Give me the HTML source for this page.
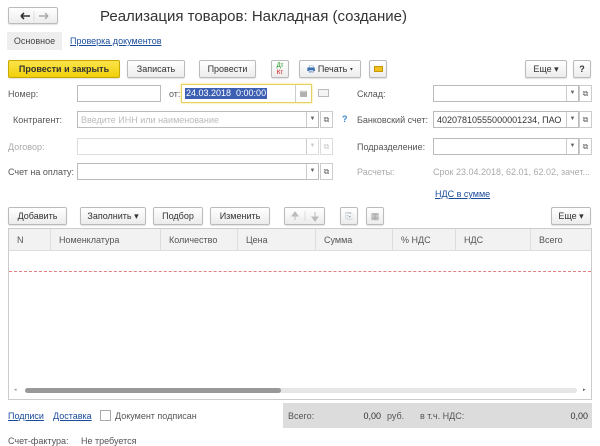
<!DOCTYPE html>
<html><head><meta charset="utf-8"><style>
*{box-sizing:border-box;margin:0;padding:0}
body{width:600px;height:443px;overflow:hidden;background:#fff;font-family:"Liberation Sans",Arial,sans-serif;font-size:9px;color:#333;position:relative}
.a{position:absolute}
.btn{position:absolute;border:1px solid #bbb;border-radius:2px;background:linear-gradient(#fff,#ececec);text-align:center;color:#333;font-size:9px;box-shadow:0 1px 1px rgba(0,0,0,.12)}
.inp{position:absolute;border:1px solid #bbb;background:#fff;height:17px}
.lbl{position:absolute;color:#555;font-size:9px}
.g{color:#aaa}
.lnk{position:absolute;color:#1a4c9c;text-decoration:underline;font-size:9px}
.dd{position:absolute;top:0;bottom:0;width:12px;border-left:1px solid #ccc;text-align:center;font-size:6px;color:#666;line-height:15px}
.ob{position:absolute;width:13px;height:17px;border:1px solid #ccc;background:#fff;font-size:8px;text-align:center;line-height:15px;color:#666}
.th{position:absolute;top:0;height:22px;line-height:22px;border-right:1px solid #ddd;color:#555;padding-left:8px}
</style></head><body>
<div class="btn" style="left:8px;top:7px;width:50px;height:17px">
<svg class="a" style="left:0;top:0" width="50" height="16"><path d="M12 8h9M12 8l3-3M12 8l3 3" stroke="#333" stroke-width="1.6" fill="none"/><line x1="25" y1="3" x2="25" y2="13" stroke="#ddd"/><path d="M30 8h9M39 8l-3-3M39 8l-3 3" stroke="#aaa" stroke-width="1.4" fill="none"/></svg></div>
<div class="a" style="left:100px;top:8px;font-size:15px;color:#333">Реализация товаров: Накладная (создание)</div>
<div class="a" style="left:7px;top:32px;width:55px;height:18px;background:#eee;line-height:18px;text-align:center;color:#444">Основное</div>
<div class="lnk" style="left:70px;top:36px">Проверка документов</div>

<div class="btn" style="left:8px;top:60px;width:112px;height:18px;line-height:16px;background:linear-gradient(#fbe44a,#f0cf0a);border-color:#c9a800;font-weight:bold;color:#333">Провести и закрыть</div>
<div class="btn" style="left:127px;top:60px;width:58px;height:18px;line-height:16px">Записать</div>
<div class="btn" style="left:199px;top:60px;width:57px;height:18px;line-height:16px">Провести</div>
<div class="btn" style="left:271px;top:60px;width:18px;height:18px;font-size:6px;line-height:7px;padding-top:2px"><span style="color:#080">Дт</span><br><span style="color:#c00">Кт</span></div>
<div class="btn" style="left:299px;top:60px;width:62px;height:18px;line-height:16px"><span style="color:#3a6fb0">🖶</span> Печать ▾</div>
<div class="btn" style="left:369px;top:60px;width:18px;height:18px"><div class="a" style="left:4px;top:5px;width:9px;height:6px;background:#f0c020;border:1px solid #c89800"></div></div>
<div class="btn" style="left:525px;top:60px;width:42px;height:18px;line-height:16px">Еще ▾</div>
<div class="btn" style="left:573px;top:60px;width:18px;height:18px;line-height:16px;font-weight:bold">?</div>

<div class="lbl" style="left:8px;top:89px">Номер:</div>
<div class="inp" style="left:77px;top:85px;width:84px"></div>
<div class="lbl" style="left:169px;top:89px">от:</div>
<div class="inp" style="left:181px;top:84px;width:131px;height:19px;border:1px solid #e8d060;box-shadow:0 0 2px #f0dc70">
<span class="a" style="left:3px;top:3px;background:#3c5fb4;color:#fff;padding:0 1px;font-size:9px;line-height:11px">24.03.2018&nbsp; 0:00:00</span>
<div class="dd" style="right:0;width:16px;font-size:8px;line-height:17px">▤</div></div>
<div class="a" style="left:318px;top:89px;width:11px;height:8px;border:1px solid #bbb;background:#f4f4f4"></div>
<div class="lbl" style="left:357px;top:89px">Склад:</div>
<div class="inp" style="left:433px;top:85px;width:146px"><div class="dd" style="right:0">▼</div></div>
<div class="ob" style="left:579px;top:85px">⧉</div>

<div class="lbl" style="left:13px;top:115px">Контрагент:</div>
<div class="inp" style="left:77px;top:111px;width:242px"><span class="a g" style="left:3px;top:3px;color:#bbb">Введите ИНН или наименование</span><div class="dd" style="right:0">▼</div></div>
<div class="ob" style="left:320px;top:111px">⧉</div>
<div class="a" style="left:342px;top:114px;color:#3a8ad0;font-weight:bold">?</div>
<div class="lbl" style="left:357px;top:115px">Банковский счет:</div>
<div class="inp" style="left:433px;top:111px;width:146px"><span class="a" style="left:3px;top:3px;color:#333">40207810555000001234, ПАО</span><div class="dd" style="right:0">▼</div></div>
<div class="ob" style="left:579px;top:111px">⧉</div>

<div class="lbl g" style="left:8px;top:142px">Договор:</div>
<div class="inp" style="left:77px;top:138px;width:242px;border-color:#ddd"><div class="dd" style="right:0;color:#ccc">▼</div></div>
<div class="ob" style="left:320px;top:138px;color:#ccc;border-color:#ddd">⧉</div>
<div class="lbl" style="left:357px;top:142px">Подразделение:</div>
<div class="inp" style="left:433px;top:138px;width:146px"><div class="dd" style="right:0">▼</div></div>
<div class="ob" style="left:579px;top:138px">⧉</div>

<div class="lbl" style="left:8px;top:167px">Счет на оплату:</div>
<div class="inp" style="left:77px;top:163px;width:242px"><div class="dd" style="right:0">▼</div></div>
<div class="ob" style="left:320px;top:163px">⧉</div>
<div class="lbl g" style="left:357px;top:167px">Расчеты:</div>
<div class="lbl g" style="left:433px;top:167px">Срок 23.04.2018, 62.01, 62.02, зачет...</div>
<div class="lnk" style="left:435px;top:189px">НДС в сумме</div>

<div class="btn" style="left:8px;top:207px;width:59px;height:18px;line-height:16px">Добавить</div>
<div class="btn" style="left:80px;top:207px;width:66px;height:18px;line-height:16px">Заполнить ▾</div>
<div class="btn" style="left:153px;top:207px;width:50px;height:18px;line-height:16px">Подбор</div>
<div class="btn" style="left:210px;top:207px;width:60px;height:18px;line-height:16px">Изменить</div>
<div class="btn" style="left:284px;top:207px;width:41px;height:18px">
<svg class="a" style="left:0;top:0" width="40" height="16"><path d="M10 12V6M7 8l3-4 3 4z" stroke="#bbb" fill="#bbb"/><line x1="20" y1="3" x2="20" y2="13" stroke="#ddd"/><path d="M30 4v6M27 9l3 4 3-4z" stroke="#bbb" fill="#bbb"/></svg></div>
<div class="btn" style="left:340px;top:207px;width:18px;height:18px;line-height:16px;color:#9ab">⎘</div>
<div class="btn" style="left:366px;top:207px;width:18px;height:18px;line-height:16px;color:#999">▦</div>
<div class="btn" style="left:551px;top:207px;width:40px;height:18px;line-height:16px">Еще ▾</div>

<div class="a" style="left:8px;top:228px;width:584px;height:172px;border:1px solid #ccc">
<div class="a" style="left:0;top:0;width:582px;height:22px;background:#f2f2f2;border-bottom:1px solid #ddd">
<div class="th" style="left:0;width:42px">N</div>
<div class="th" style="left:42px;width:110px">Номенклатура</div>
<div class="th" style="left:152px;width:77px">Количество</div>
<div class="th" style="left:229px;width:78px">Цена</div>
<div class="th" style="left:307px;width:77px">Сумма</div>
<div class="th" style="left:384px;width:63px">% НДС</div>
<div class="th" style="left:447px;width:75px">НДС</div>
<div class="th" style="left:522px;width:60px;border:0">Всего</div>
</div>
<div class="a" style="left:0;top:42px;width:582px;border-top:1px dashed #e08080"></div>
<div class="a" style="left:5px;top:158px;font-size:5px;color:#999">◂</div>
<div class="a" style="left:16px;top:159px;width:552px;height:5px;background:#e6e6e6;border-radius:3px"></div>
<div class="a" style="left:16px;top:159px;width:256px;height:5px;background:#999;border-radius:3px"></div>
<div class="a" style="left:574px;top:158px;font-size:5px;color:#555">▸</div>
</div>

<div class="lnk" style="left:8px;top:411px">Подписи</div>
<div class="lnk" style="left:53px;top:411px">Доставка</div>
<div class="a" style="left:100px;top:410px;width:11px;height:11px;border:1px solid #aaa;background:#fff"></div>
<div class="lbl" style="left:115px;top:411px">Документ подписан</div>
<div class="a" style="left:283px;top:403px;width:309px;height:25px;background:#dcdcdc">
<span class="a" style="left:5px;top:8px;color:#555">Всего:</span>
<span class="a" style="left:58px;top:8px;width:40px;text-align:right;color:#333">0,00</span>
<span class="a" style="left:104px;top:8px;color:#555">руб.</span>
<span class="a" style="left:137px;top:8px;color:#555">в т.ч. НДС:</span>
<span class="a" style="right:4px;top:8px;color:#333">0,00</span>
</div>
<div class="lbl" style="left:8px;top:436px">Счет-фактура:&nbsp;&nbsp;&nbsp;&nbsp; Не требуется</div>
</body></html>
